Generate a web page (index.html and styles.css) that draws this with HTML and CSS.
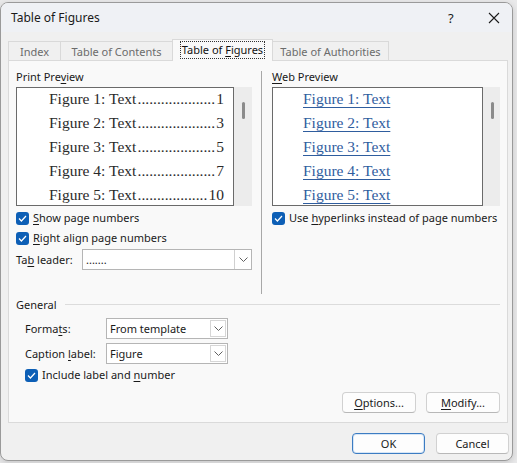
FILE: index.html
```html
<!DOCTYPE html>
<html>
<head>
<meta charset="utf-8">
<link rel="stylesheet" href="styles.css">
</head>
<body>
<div class="dialog">
  <div class="titlebar">
    <span class="title">Table of Figures</span>
    <span class="help">?</span>
    <svg class="close" width="12" height="12" viewBox="0 0 12 12"><path d="M1 1 L11 11 M11 1 L1 11" stroke="#1b1b1b" stroke-width="1.1" fill="none"/></svg>
  </div>
  <div class="tabs">
    <div class="tab t1">Index</div>
    <div class="tab t2">Table of Contents</div>
    <div class="tab t3 active"><span class="focus">Table of <u>F</u>igures</span></div>
    <div class="tab t4">Table of Authorities</div>
  </div>
  <div class="panel">
    <div class="top">
      <div class="col left">
        <div class="lbl">Print Pre<u>v</u>iew</div>
        <div class="preview">
          <div class="pbox print">
            <div class="pline"><span>Figure 1: Text</span><span>....................</span><span>1</span></div>
            <div class="pline"><span>Figure 2: Text</span><span>....................</span><span>3</span></div>
            <div class="pline"><span>Figure 3: Text</span><span>....................</span><span>5</span></div>
            <div class="pline"><span>Figure 4: Text</span><span>....................</span><span>7</span></div>
            <div class="pline"><span>Figure 5: Text</span><span>..................</span><span>10</span></div>
          </div>
          <div class="track"><div class="thumb"></div></div>
        </div>
        <div class="chk first"><span class="box"><svg width="9" height="7" viewBox="0 0 9 7"><path d="M1 3.5 L3.4 6 L8 1" stroke="#fff" stroke-width="1.2" fill="none"/></svg></span><span><u>S</u>how page numbers</span></div>
        <div class="chk"><span class="box"><svg width="9" height="7" viewBox="0 0 9 7"><path d="M1 3.5 L3.4 6 L8 1" stroke="#fff" stroke-width="1.2" fill="none"/></svg></span><span><u>R</u>ight align page numbers</span></div>
        <div class="leader">
          <span class="leader-lbl">Ta<u>b</u> leader:</span>
          <div class="combo wide"><span class="val">.......</span><span class="drop flat"><svg width="9" height="5" viewBox="0 0 9 5"><path d="M0.5 0.5 L4.5 4.5 L8.5 0.5" stroke="#606060" fill="none"/></svg></span></div>
        </div>
      </div>
      <div class="vdiv"></div>
      <div class="col right">
        <div class="lbl"><u>W</u>eb Preview</div>
        <div class="preview">
          <div class="pbox web">
            <div class="wline"><span class="link">Figure 1: Text</span></div>
            <div class="wline"><span class="link">Figure 2: Text</span></div>
            <div class="wline"><span class="link">Figure 3: Text</span></div>
            <div class="wline"><span class="link">Figure 4: Text</span></div>
            <div class="wline"><span class="link">Figure 5: Text</span></div>
          </div>
          <div class="track"><div class="thumb"></div></div>
        </div>
        <div class="chk first"><span class="box"><svg width="9" height="7" viewBox="0 0 9 7"><path d="M1 3.5 L3.4 6 L8 1" stroke="#fff" stroke-width="1.2" fill="none"/></svg></span><span>Use <u>h</u>yperlinks instead of page numbers</span></div>
      </div>
    </div>
    <div class="ghead"><span>General</span><span class="gline"></span></div>
    <div class="grow first-row">
      <span class="glbl">Forma<u>t</u>s:</span>
      <div class="combo narrow"><span class="val">From template</span><span class="drop"><svg width="9" height="5" viewBox="0 0 9 5"><path d="M0.5 0.5 L4.5 4.5 L8.5 0.5" stroke="#606060" fill="none"/></svg></span></div>
    </div>
    <div class="grow">
      <span class="glbl">Caption <u>l</u>abel:</span>
      <div class="combo narrow"><span class="val">Figure</span><span class="drop"><svg width="9" height="5" viewBox="0 0 9 5"><path d="M0.5 0.5 L4.5 4.5 L8.5 0.5" stroke="#606060" fill="none"/></svg></span></div>
    </div>
    <div class="chk incl"><span class="box"><svg width="9" height="7" viewBox="0 0 9 7"><path d="M1 3.5 L3.4 6 L8 1" stroke="#fff" stroke-width="1.2" fill="none"/></svg></span><span>Include label and <u>n</u>umber</span></div>
    <div class="pbtns">
      <div class="btn"><u>O</u>ptions...</div>
      <div class="btn"><u>M</u>odify...</div>
    </div>
  </div>
  <div class="footer">
    <div class="btn default">OK</div>
    <div class="btn">Cancel</div>
  </div>
</div>
</body>
</html>
```
FILE: styles.css
```css
* { box-sizing: border-box; }
html, body { margin: 0; padding: 0; }
body {
  width: 517px;
  height: 463px;
  background: #e9e9ea;
  padding-top: 2px;
  font-family: "Noto Sans", "Open Sans", sans-serif;
  font-size: 11px;
  line-height: 16px;
  color: #1a1a1a;
  overflow: hidden;
}
u { text-decoration: underline; text-underline-offset: 2px; text-decoration-thickness: 1px; }

.dialog {
  width: 513px;
  height: 459px;
  background: #f0f0f0;
  border: 1px solid #9a9a9a;
  border-radius: 8px;
  overflow: hidden;
  display: flex;
  flex-direction: column;
  box-shadow: 0 2px 6px rgba(0,0,0,0.15);
}

.titlebar {
  height: 29px;
  flex: none;
  display: flex;
  align-items: center;
  padding-left: 10px;
  background: #eff1f5;
}
.title { font-size: 12px; flex: 1; }
.help { font-size: 13px; width: 10px; margin-right: 30px; color: #1b1b1b; }
.close { margin-right: 12px; }

.tabs {
  height: 28px;
  flex: none;
  display: flex;
  align-items: flex-end;
  padding-left: 7px;
  position: relative;
  z-index: 1;
}
.tab {
  height: 19px;
  border: 1px solid #d9d9d9;
  border-bottom: none;
  border-right: none;
  background: #f0f0f0;
  color: #6b6b6b;
  text-align: center;
  line-height: 18px;
  padding-top: 1px;
  white-space: nowrap;
}
.t1 { width: 52px; }
.t2 { width: 112px; }
.t3 { width: 101px; }
.t4 { width: 116px; border-right: 1px solid #d9d9d9; }
.tab.active {
  height: 22px;
  margin-bottom: -1px;
  background: #f9f9f9;
  color: #111;
  border-right: 1px solid #d9d9d9;
  padding-top: 1px;
}
.t3 + .t4 { border-left: none; }
.focus {
  border: 1px dotted #333;
  padding: 0 1px 1px;
  line-height: 15px;
  display: inline-block;
}

.panel {
  margin-left: 7px;
  width: 500px;
  height: 363px;
  flex: none;
  background: #f9f9f9;
  border: 1px solid #dadada;
  padding: 8px 7px 0 7px;
}

.top { display: flex; height: 225px; }
.col.left { width: 236px; }
.vdiv { width: 1px; background: #a8a8a8; margin: 2px 10px 0 9px; }
.col.right { width: 228px; }

.lbl { height: 16px; }
.preview { display: flex; height: 119px; margin-top: 2px; }
.pbox {
  background: #fff;
  border: 1px solid #6a6a6a;
  overflow: hidden;
}
.print { width: 218px; padding: 0 9px 0 32px; }
.web { width: 211px; padding-left: 30px; }
.track { flex: 1; background: #ececec; position: relative; }
.thumb { position: absolute; left: 8px; top: 15px; width: 3px; height: 17px; background: #8b8b8b; border-radius: 2px; }

.pline, .wline {
  height: 24px;
  line-height: 22px;
  font-family: "Liberation Serif", "Times New Roman", serif;
  font-size: 15.5px;
  display: flex;
  white-space: nowrap;
  color: #2a2a2a;
}
.pline { justify-content: space-between; }
.link { color: #2f5d9e; text-decoration: underline; text-underline-offset: 3px; text-decoration-thickness: 1px; }

.chk { display: flex; align-items: center; height: 20px; white-space: nowrap; }
.chk.first { margin-top: 2px; }
.box {
  width: 13px; height: 13px;
  background: #0d5fb6;
  border-radius: 3px;
  display: flex; align-items: center; justify-content: center;
  margin-right: 4px;
  flex: none;
}

.leader { display: flex; align-items: center; margin-top: 1px; }
.leader-lbl { width: 66px; }
.combo {
  height: 21px;
  background: #fff;
  border: 1px solid #b5b5b5;
  display: flex;
  align-items: center;
}
.combo .val { flex: 1; padding-left: 3px; }
.combo.wide { width: 170px; }
.combo.narrow { width: 122px; }
.drop {
  width: 17px; height: 19px;
  display: flex; align-items: center; justify-content: center;
  border-left: 1px solid #d0d0d0;
}
.combo.narrow .drop { height: 17px; width: 16px; border: 1px solid #d6d6d6; margin-right: 1px; }

.ghead { display: flex; align-items: center; margin-top: 3px; height: 16px; }
.gline { flex: 1; height: 1px; background: #dcdcdc; margin-left: 8px; margin-top: -1px; }
.grow { display: flex; align-items: center; padding-left: 9px; margin-top: 4px; }
.grow.first-row { margin-top: 5px; }
.glbl { width: 81px; }
.chk.incl { padding-left: 9px; margin-top: 1px; }

.pbtns { display: flex; justify-content: flex-end; gap: 10px; margin-top: 7px; }
.btn {
  width: 74px; height: 21px;
  background: #fdfdfd;
  border: 1px solid #d1d1d1;
  border-bottom-color: #b8b8b8;
  border-radius: 4px;
  text-align: center;
  line-height: 19px;
  color: #1a1a1a;
}
.footer { display: flex; justify-content: flex-end; gap: 11px; padding-right: 3px; margin-top: 10px; }
.footer .btn { width: 73px; }
.btn.default { border: 1px solid #3c7cc2; box-shadow: inset 0 0 0 1px #d6e6f7; }
```
